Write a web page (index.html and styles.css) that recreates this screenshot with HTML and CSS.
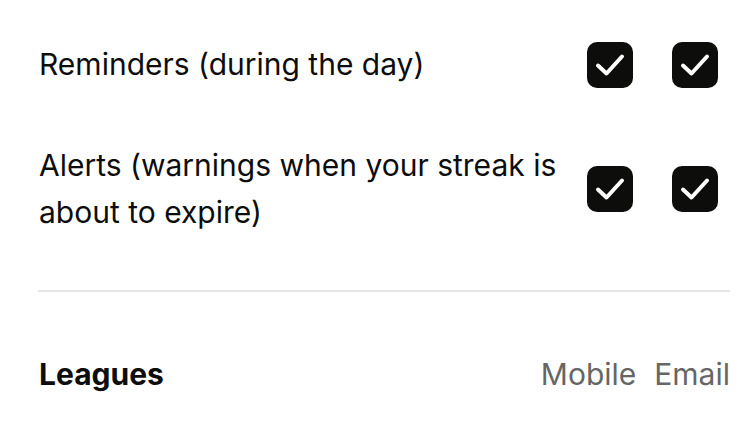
FILE: index.html
```html
<!DOCTYPE html>
<html>
	<head>
		<meta charset="UTF-8">
		<title>Notifications</title>
		<link rel="stylesheet" href="styles.css">
	</head>
	<body>
		<div class="settings">
			<div class="row">
				<div class="label">Reminders (during the day)</div>
				<div class="checks">
					<span class="check"><svg viewBox="0 0 46 46"><polyline points="11,23.5 19.5,31.5 35,14.5"/></svg></span>
					<span class="check"><svg viewBox="0 0 46 46"><polyline points="11,23.5 19.5,31.5 35,14.5"/></svg></span>
				</div>
			</div>
			<div class="row">
				<div class="label">Alerts (warnings when your streak is about to expire)</div>
				<div class="checks">
					<span class="check"><svg viewBox="0 0 46 46"><polyline points="11,23.5 19.5,31.5 35,14.5"/></svg></span>
					<span class="check"><svg viewBox="0 0 46 46"><polyline points="11,23.5 19.5,31.5 35,14.5"/></svg></span>
				</div>
			</div>
			<hr class="divider">
			<div class="section-head">
				<div class="section-title">Leagues</div>
				<div class="cols">
					<span>Mobile</span>
					<span>Email</span>
				</div>
			</div>
		</div>
	</body>
</html>
```
FILE: styles.css
```css
body {
	margin: 0;
	background: #fff;
	font-family: Inter, "Noto Sans", sans-serif;
	color: #0d0d0d;
}

.settings {
	padding: 41px 20px 0 39px;
}

.row {
	display: flex;
	align-items: center;
	justify-content: space-between;
	margin-bottom: 54px;
}

.label {
	font-size: 30px;
	line-height: 47px;
	max-width: 530px;
}

.checks {
	display: flex;
	gap: 39px;
	margin-right: 12px;
}

.check {
	width: 46px;
	height: 46px;
	border-radius: 10px;
	background: #0d0d0b;
	display: block;
}

.check svg {
	width: 46px;
	height: 46px;
	display: block;
}

.check polyline {
	fill: none;
	stroke: #fff;
	stroke-width: 4;
	stroke-linecap: round;
	stroke-linejoin: round;
}

.divider {
	border: 0;
	height: 2px;
	background: #e5e5e5;
	margin: 2px 0 59px -1px;
}

.section-head {
	display: flex;
	align-items: center;
	justify-content: space-between;
	line-height: 47px;
	font-size: 30px;
}

.section-title {
	font-weight: 700;
}

.cols {
	display: flex;
	gap: 18px;
	color: #666;
}
```
